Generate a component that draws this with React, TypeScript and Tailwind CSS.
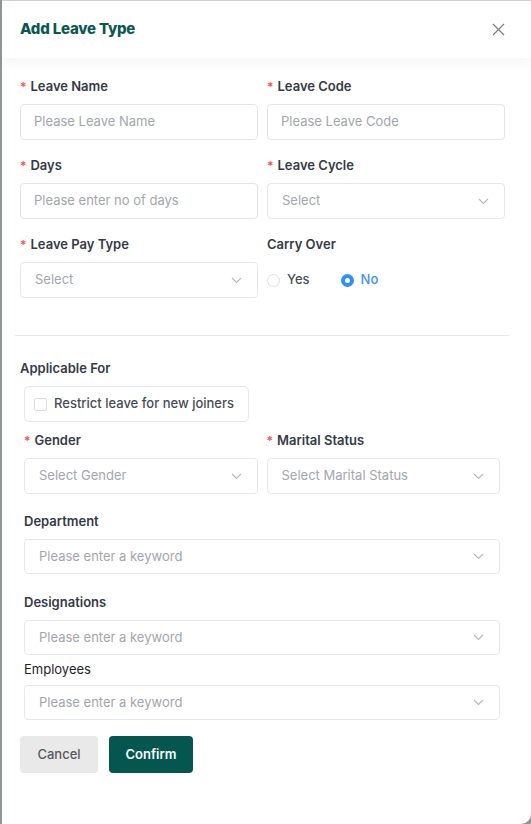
import React from 'react';

const Chevron: React.FC = () => (
  <svg width="11" height="7" viewBox="0 0 11 7" fill="none" className="shrink-0">
    <path d="M1 1l4.5 4.5L10 1" stroke="#b4b7bd" strokeWidth="1.1" />
  </svg>
);

const Label: React.FC<{ text: string; required?: boolean; className?: string }> = ({
  text,
  required,
  className = '',
}) => (
  <div className={`flex items-center h-5 text-[13px] font-semibold text-[#353a47] ${className}`}>
    {required && <span className="text-[#ff4d4f] mr-[4px] text-[12px] leading-none">*</span>}
    {text}
  </div>
);

const Input: React.FC<{ placeholder: string }> = ({ placeholder }) => (
  <div className="h-9 flex items-center px-[13px] border border-[#e3e5ea] rounded-[4px] text-[13px] text-[#a3a6ad]">
    {placeholder}
  </div>
);

const Select: React.FC<{ placeholder: string; h?: string }> = ({ placeholder, h = 'h-9' }) => (
  <div
    className={`${h} flex items-center justify-between pl-[14px] pr-[15px] border border-[#e6e8ec] rounded-[4px] text-[13px] text-[#a3a6ad]`}
  >
    <span>{placeholder}</span>
    <Chevron />
  </div>
);

export default function App() {
  return (
    <div
      className="w-[531px] h-[824px] overflow-hidden bg-[#8f9898] pl-[2px]"
      style={{ fontFamily: 'Inter, "Noto Sans", sans-serif' }}
    >
      <div className="h-full bg-white border-t border-[#cfd3d3] rounded-br-[10px] flex flex-col">
        <div className="relative z-10 h-[57px] flex items-center justify-between pl-[18px] pr-[26px] bg-white shadow-[0_5px_12px_rgba(0,0,0,0.045)]">
          <h1 className="text-[15px] font-extrabold text-[#0b5852] tracking-[-0.2px]">Add Leave Type</h1>
          <svg width="13" height="13" viewBox="0 0 13 13" fill="none">
            <path d="M1 1l11 11M12 1L1 12" stroke="#7b7f85" strokeWidth="1.2" />
          </svg>
        </div>

        <div className="pt-[19px] pl-[18px] pr-[26px]">
          <div className="grid grid-cols-2 gap-x-[9px] gap-y-4">
            <div>
              <Label text="Leave Name" required className="mb-[7px]" />
              <Input placeholder="Please Leave Name" />
            </div>
            <div>
              <Label text="Leave Code" required className="mb-[7px]" />
              <Input placeholder="Please Leave Code" />
            </div>
            <div>
              <Label text="Days" required className="mb-[7px]" />
              <Input placeholder="Please enter no of days" />
            </div>
            <div>
              <Label text="Leave Cycle" required className="mb-[7px]" />
              <Select placeholder="Select" />
            </div>
            <div>
              <Label text="Leave Pay Type" required className="mb-[7px]" />
              <Select placeholder="Select" />
            </div>
            <div>
              <Label text="Carry Over" className="mb-[7px]" />
              <div className="h-9 flex items-center text-[13px] font-medium">
                <span className="w-[13px] h-[13px] rounded-full border border-[#dcdfe4]" />
                <span className="ml-[7px] text-[#4a4f5a]">Yes</span>
                <span className="ml-[31px] w-[13px] h-[13px] rounded-full bg-[#2f8fff] flex items-center justify-center">
                  <span className="w-[5px] h-[5px] rounded-full bg-white" />
                </span>
                <span className="ml-[7px] text-[#3b93ff]">No</span>
              </div>
            </div>
          </div>
        </div>

        <div className="mt-[37px] ml-[13px] w-[494px] border-t border-[#e8e9ec]" />

        <div className="pl-[18px] pr-[31px] pt-[23px]">
          <Label text="Applicable For" className="mb-[7px]" />
          <div className="ml-1 w-[225px] h-9 flex items-center px-[9px] border border-[#e6e8ec] rounded-[5px]">
            <span className="w-[13px] h-[13px] rounded-[2px] border border-[#d9dce1]" />
            <span className="ml-[7px] text-[13px] font-medium text-[#474c57]">Restrict leave for new joiners</span>
          </div>

          <div className="ml-1 mt-[9px] grid grid-cols-2 gap-x-[9px]">
            <div>
              <Label text="Gender" required className="mb-[7px]" />
              <Select placeholder="Select Gender" />
            </div>
            <div>
              <Label text="Marital Status" required className="mb-[7px]" />
              <Select placeholder="Select Marital Status" />
            </div>
          </div>

          <div className="ml-1 mt-[18px]">
            <Label text="Department" className="mb-[7px]" />
            <Select placeholder="Please enter a keyword" h="h-[35px]" />
          </div>

          <div className="ml-1 mt-[19px]">
            <Label text="Designations" className="mb-[7px]" />
            <Select placeholder="Please enter a keyword" h="h-[35px]" />
          </div>

          <div className="ml-1 mt-[5px]">
            <div className="h-5 flex items-center text-[13px] text-[#1f2328]">Employees</div>
            <div className="mt-[5px]">
              <Select placeholder="Please enter a keyword" h="h-[35px]" />
            </div>
          </div>

          <div className="mt-4 flex gap-[11px]">
            <button className="w-[78px] h-[37px] rounded-[4px] bg-[#e9e9e9] text-[13px] font-medium text-[#555a60]">
              Cancel
            </button>
            <button className="w-[84px] h-[37px] rounded-[4px] bg-[#05564f] text-[13px] font-semibold text-white">
              Confirm
            </button>
          </div>
        </div>
      </div>
    </div>
  );
}
